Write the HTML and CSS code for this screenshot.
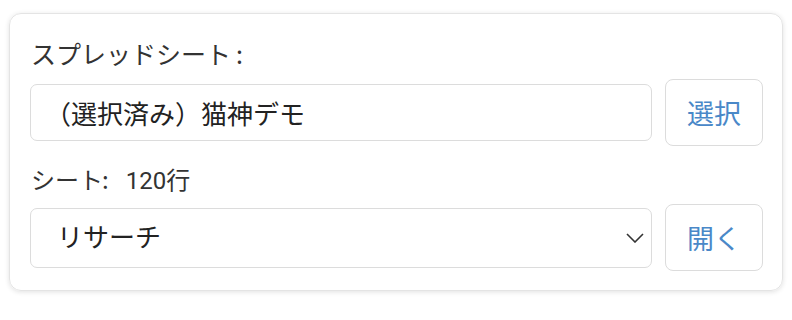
FILE: index.html
```html
<!DOCTYPE html>
<html lang="ja">
<head>
<meta charset="utf-8">
<link rel="stylesheet" href="styles.css">
</head>
<body>
<div class="card">
  <div class="label">スプレッドシート<span class="colon colon-one">:</span></div>
  <div class="row row-one">
    <input class="field" type="text" value="（選択済み）猫神デモ" readonly>
    <button class="btn">選択</button>
  </div>
  <div class="label label-two">シート<span class="colon colon-two">:</span>120行</div>
  <div class="row row-two">
    <div class="select-wrap">
      <select class="field select">
        <option>リサーチ</option>
      </select>
      <svg class="chevron" width="18" height="10" viewBox="0 0 18 10"><polyline points="1,1 9,9 17,1" fill="none" stroke="#333" stroke-width="1.6"/></svg>
    </div>
    <button class="btn">開く</button>
  </div>
</div>
</body>
</html>
```

FILE: styles.css
```css
* { box-sizing: border-box; }
html, body { margin: 0; padding: 0; background: #fff; }
body {
  font-family: Roboto, "Noto Sans CJK JP", sans-serif;
  width: 792px;
  height: 320px;
  padding: 13px 9px 0 9px;
}
.card {
  width: 774px;
  height: 278px;
  border: 1px solid #e4e4e4;
  border-radius: 12px;
  box-shadow: 0 1px 5px rgba(0, 0, 0, 0.12);
  padding: 22px 19px 19px 20px;
  display: flex;
  flex-direction: column;
}
.label {
  font-size: 25px;
  line-height: 34px;
  color: #333;
  padding-left: 1px;
  height: 34px;
}
.colon {
  font-family: "Noto Sans CJK JP", sans-serif;
}
.colon-one { margin-left: 5px; }
.colon-two { margin-left: -1px; margin-right: 17px; }
.label-two { font-size: 24px; }
.row {
  display: flex;
  align-items: center;
  gap: 13px;
}
.row-one { margin-top: 9px; }
.label-two { margin-top: 16px; }
.row-two { margin-top: 8px; }
.field {
  font-family: Roboto, "Noto Sans CJK JP", sans-serif;
  font-size: 26px;
  color: #222;
  border: 1px solid #dcdcdc;
  border-radius: 7px;
  background: #fff;
  outline: none;
  padding: 0 14px;
}
input.field {
  width: 622px;
  height: 57px;
}
.select-wrap {
  position: relative;
  width: 622px;
  height: 60px;
}
.select {
  appearance: none;
  -webkit-appearance: none;
  width: 100%;
  height: 100%;
  padding-left: 26px;
}
.chevron {
  position: absolute;
  left: 596px;
  top: 25px;
}
.btn {
  width: 98px;
  height: 67px;
  border: 1px solid #dcdcdc;
  border-radius: 8px;
  background: #fff;
  color: #4a88c8;
  font-family: Roboto, "Noto Sans CJK JP", sans-serif;
  font-size: 27px;
  padding: 0;
}
```
